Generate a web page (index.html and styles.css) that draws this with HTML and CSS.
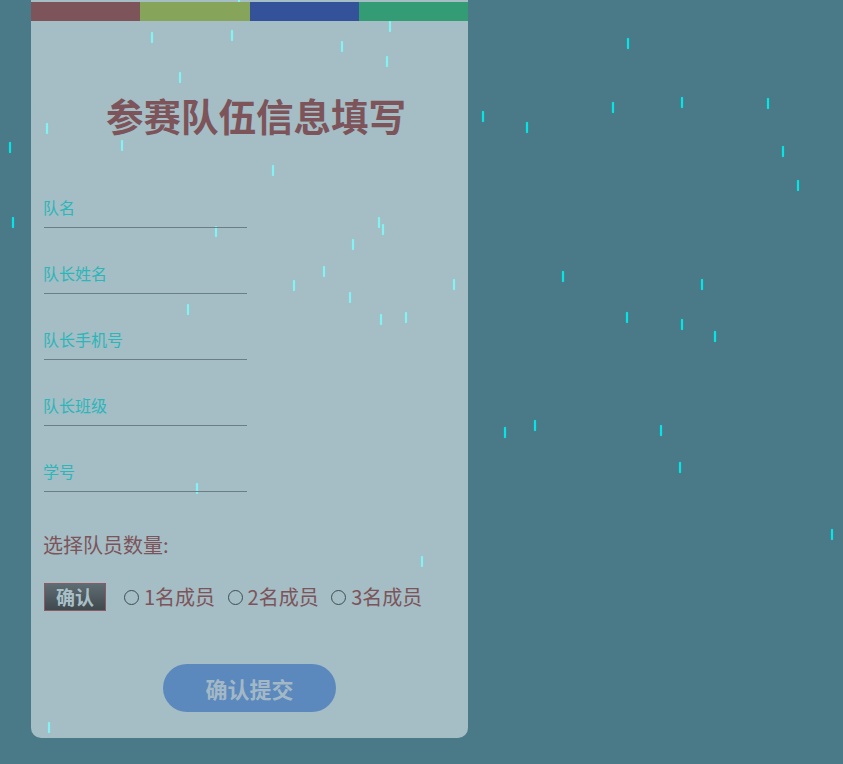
FILE: index.html
```html
<!DOCTYPE html>
<html lang="zh">
<head>
<meta charset="utf-8">
<title>参赛队伍信息填写</title>
<link rel="stylesheet" href="styles.css">
</head>
<body>
<div class="rain">
<span class="drop" style="left:151px;top:32px"></span>
<span class="drop" style="left:231px;top:30px"></span>
<span class="drop" style="left:341px;top:41px"></span>
<span class="drop" style="left:389px;top:21px"></span>
<span class="drop" style="left:386px;top:56px"></span>
<span class="drop" style="left:238px;top:-1px"></span>
<span class="drop" style="left:179px;top:72px"></span>
<span class="drop" style="left:627px;top:38px"></span>
<span class="drop" style="left:612px;top:102px"></span>
<span class="drop" style="left:681px;top:97px"></span>
<span class="drop" style="left:767px;top:98px"></span>
<span class="drop" style="left:482px;top:111px"></span>
<span class="drop" style="left:526px;top:122px"></span>
<span class="drop" style="left:46px;top:123px"></span>
<span class="drop" style="left:121px;top:140px"></span>
<span class="drop" style="left:9px;top:142px"></span>
<span class="drop" style="left:782px;top:146px"></span>
<span class="drop" style="left:272px;top:165px"></span>
<span class="drop" style="left:797px;top:180px"></span>
<span class="drop" style="left:12px;top:217px"></span>
<span class="drop" style="left:215px;top:226px"></span>
<span class="drop" style="left:378px;top:217px"></span>
<span class="drop" style="left:382px;top:224px"></span>
<span class="drop" style="left:352px;top:239px"></span>
<span class="drop" style="left:323px;top:266px"></span>
<span class="drop" style="left:293px;top:280px"></span>
<span class="drop" style="left:453px;top:279px"></span>
<span class="drop" style="left:562px;top:271px"></span>
<span class="drop" style="left:701px;top:279px"></span>
<span class="drop" style="left:349px;top:292px"></span>
<span class="drop" style="left:187px;top:304px"></span>
<span class="drop" style="left:380px;top:314px"></span>
<span class="drop" style="left:405px;top:312px"></span>
<span class="drop" style="left:626px;top:312px"></span>
<span class="drop" style="left:681px;top:319px"></span>
<span class="drop" style="left:714px;top:331px"></span>
<span class="drop" style="left:504px;top:427px"></span>
<span class="drop" style="left:534px;top:420px"></span>
<span class="drop" style="left:660px;top:425px"></span>
<span class="drop" style="left:679px;top:462px"></span>
<span class="drop" style="left:196px;top:483px"></span>
<span class="drop" style="left:421px;top:556px"></span>
<span class="drop" style="left:831px;top:529px"></span>
<span class="drop" style="left:48px;top:722px"></span>
</div>

<div class="card">
  <div class="stripes">
    <span class="s1"></span><span class="s2"></span><span class="s3"></span><span class="s4"></span>
  </div>
  <div class="body">
    <h1 class="title">参赛队伍信息填写</h1>
    <div class="field"><div class="label">队名</div><div class="line"></div></div>
    <div class="field"><div class="label">队长姓名</div><div class="line"></div></div>
    <div class="field"><div class="label">队长手机号</div><div class="line"></div></div>
    <div class="field"><div class="label">队长班级</div><div class="line"></div></div>
    <div class="field"><div class="label">学号</div><div class="line"></div></div>
    <div class="count">选择队员数量:</div>
    <div class="choose">
      <button class="confirm">确认</button>
      <label class="opt"><span class="radio"></span>1名成员</label>
      <label class="opt"><span class="radio"></span>2名成员</label>
      <label class="opt"><span class="radio"></span>3名成员</label>
    </div>
  </div>
  <div class="submit-row"><button class="submit">确认提交</button></div>
</div>
</body>
</html>
```

FILE: styles.css
```css
html, body {
  margin: 0;
  padding: 0;
}
body {
  background: #4a7a88;
  font-family: "Noto Sans CJK SC", "Microsoft YaHei", sans-serif;
  height: 764px;
  overflow: hidden;
  position: relative;
}
.rain {
  position: absolute;
  inset: 0;
  z-index: 0;
}
.drop {
  position: absolute;
  width: 2px;
  height: 11px;
  background: #00f0f0;
  opacity: 0.9;
  border-radius: 1px;
  box-shadow: 0 0 1px #00f0f0;
}
.card {
  position: relative;
  z-index: 1;
  margin-left: 31px;
  width: 437px;
  height: 738px;
  background: rgba(255, 255, 255, 0.5);
  border-radius: 0 0 10px 10px;
  display: flex;
  flex-direction: column;
}
.stripes {
  display: flex;
  margin-top: 2px;
  height: 19px;
}
.stripes span { flex: 1; }
.s1 { background: #7c545a; }
.s2 { background: #86a55a; }
.s3 { background: #33529a; }
.s4 { background: #349c74; }
.body {
  padding-left: 13px;
  display: flex;
  flex-direction: column;
}
.title {
  margin: 71px 0 0;
  text-align: center;
  font-size: 37.5px;
  line-height: 46px;
  font-weight: 700;
  color: #7c545a;
}
.field {
  margin-top: 35px;
  width: 203px;
}
.field:first-of-type { margin-top: 59px; }
.label {
  font-size: 16px;
  line-height: 20px;
  color: #2bb6ba;
  padding-bottom: 10px;
  margin-left: -1px;
}
.line {
  height: 1px;
  background: #6a7e84;
}
.count {
  margin-top: 39px;
  font-size: 20px;
  line-height: 28px;
  color: #7c545a;
  margin-left: -1px;
}
.choose {
  margin-top: 24px;
  display: flex;
  align-items: center;
  height: 28px;
}
.confirm {
  box-sizing: border-box;
  width: 62px;
  height: 28px;
  margin: 0;
  padding: 0;
  border: 1px solid #8d5a62;
  background: linear-gradient(#5e6d73, #40494e);
  color: #a9c0c8;
  font-family: inherit;
  font-size: 19px;
  font-weight: 700;
  line-height: 26px;
  margin-right: 18px;
}
.opt {
  display: flex;
  align-items: center;
  font-size: 20px;
  line-height: 28px;
  color: #7c545a;
  margin-right: 12.5px;
}
.radio {
  box-sizing: border-box;
  width: 15px;
  height: 15px;
  border: 1px solid #3d4e54;
  border-radius: 50%;
  margin-right: 5px;
}
.submit-row {
  display: flex;
  justify-content: center;
  margin-top: 53px;
}
.submit {
  width: 173px;
  height: 48px;
  border: none;
  border-radius: 24px;
  background: #5b89bd;
  color: #a3b8c6;
  font-family: inherit;
  font-size: 22px;
  font-weight: 700;
  padding: 0;
}
```
